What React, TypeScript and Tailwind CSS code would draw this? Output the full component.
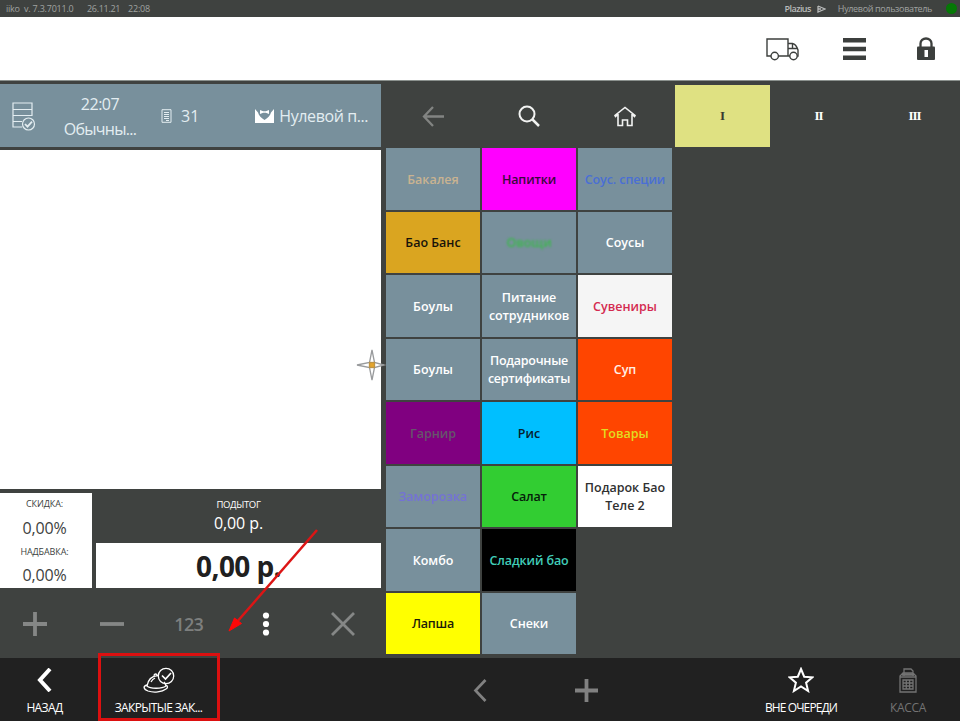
import type { ReactNode } from "react";

type Tile = { label: string; box: string; text: string };

const slate = "bg-[#78909c]";

const tiles: (Tile | null)[] = [
  { label: "Бакалея", box: slate, text: "text-[#c9b391]" },
  { label: "Напитки", box: "bg-[#ff00ff]", text: "text-[#3a0a3c] tracking-[-0.15px]" },
  { label: "Соус. специи", box: slate, text: "text-[#4a6fd4] tracking-[-0.1px] whitespace-nowrap" },
  { label: "Бао Банс", box: "bg-[#daa520]", text: "text-[#17130a]" },
  { label: "Овощи", box: slate, text: "text-[#3cb84c] blur-[0.8px]" },
  { label: "Соусы", box: slate, text: "text-white" },
  { label: "Боулы", box: slate, text: "text-white" },
  { label: "Питание сотрудников", box: slate, text: "text-white tracking-[-0.1px]" },
  { label: "Сувениры", box: "bg-[#f5f5f5]", text: "text-[#d42a50]" },
  { label: "Боулы", box: slate, text: "text-white" },
  { label: "Подарочные сертификаты", box: slate, text: "text-white tracking-[-0.25px]" },
  { label: "Суп", box: "bg-[#ff4500]", text: "text-[#fff0e6]" },
  { label: "Гарнир", box: "bg-[#800080]", text: "text-[#66566b]" },
  { label: "Рис", box: "bg-[#00bfff]", text: "text-[#06202c]" },
  { label: "Товары", box: "bg-[#ff4500]", text: "text-[#e2dc20]" },
  { label: "Заморозка", box: slate, text: "text-[#7471d6] blur-[0.6px]" },
  { label: "Салат", box: "bg-[#32cd32]", text: "text-[#06200a] tracking-[-0.2px]" },
  { label: "Подарок Бао Теле 2", box: "bg-white", text: "text-[#303030]" },
  { label: "Комбо", box: slate, text: "text-white" },
  { label: "Сладкий бао", box: "bg-black", text: "text-[#40cdb8] tracking-[-0.1px]" },
  null,
  { label: "Лапша", box: "bg-[#ffff00]", text: "text-[#1c1c08] tracking-[-0.2px]" },
  { label: "Снеки", box: slate, text: "text-white tracking-[-0.1px]" },
];

function TopBar() {
  return (
    <div className="flex h-[17px] items-center bg-[#3f4240] pl-[6px] text-[9px] leading-none text-[#a0a3a1]">
      <span className="w-[81px] tracking-[-0.22px]">iiko&nbsp; v. 7.3.7011.0</span>
      <span className="w-[41px] tracking-[-0.3px]">26.11.21</span>
      <span className="tracking-[-0.2px]">22:08</span>
      <span className="ml-auto font-semibold tracking-[-0.55px] text-[#b9bbba]">Plazius</span>
      <svg className="ml-[6px]" width="9" height="8" viewBox="0 0 9 8" fill="none" stroke="#b9bbba" strokeWidth="1.3">
        <path d="M1 1 8 4 1 7V1M1 4H4" />
      </svg>
      <span className="mr-[14px] ml-[12px] tracking-[-0.35px]">Нулевой пользователь</span>
      <span className="mr-[3px] size-[11px] rounded-full bg-[#057805]" />
    </div>
  );
}

function AppHeader() {
  return (
    <div className="flex h-[64px] items-center justify-end border-b border-[#8b918e] bg-white text-[#3c3f3d]">
      <svg width="34" height="24" viewBox="0 0 34 24" fill="none" stroke="currentColor" strokeWidth="1.4">
        <path d="M5 19H1V2H22V19H12.500M22 6.500H26.500Q30 7 32 13V19H31M24 19H22M22 11.500H31.500M26.500 7V11.500" />
        <circle cx="8.700" cy="19" r="3.700" fill="white" />
        <circle cx="27.500" cy="19" r="3.700" fill="white" />
      </svg>
      <svg className="ml-[43px]" width="23" height="22" viewBox="0 0 23 22" fill="currentColor">
        <path d="M0 0H23V4.500H0ZM0 8.700H23V13.200H0ZM0 17.400H23V21.900H0Z" />
      </svg>
      <svg className="mr-[25px] ml-[51px]" width="18" height="23" viewBox="0 0 18 23">
        <path d="M3.500 11V6.500a5.500 5 0 0 1 11 0V11" fill="none" stroke="currentColor" strokeWidth="2.300" />
        <rect y="9.500" width="18" height="13.500" rx="1" fill="currentColor" />
        <rect x="7.500" y="13" width="3.500" height="7" fill="white" />
      </svg>
    </div>
  );
}

function OrderHeader() {
  return (
    <div className="flex h-[63px] items-center bg-[#78909c] pt-px text-[16px] leading-[25px] text-[#e3edf1]">
      <svg className="ml-[12px]" width="24" height="29" viewBox="0 0 24 29" fill="none" stroke="currentColor" strokeWidth="1.200">
        <path d="M10 25H1V1H20V14M1 7.500H20M1 13.500H20M1 19.500H10" />
        <circle cx="16.500" cy="22" r="6" />
        <path d="m13 22 2.500 2.700 4.500-5" strokeWidth="1.800" />
      </svg>
      <div className="ml-[20px] flex w-[88px] flex-col items-center pt-px">
        <span className="tracking-[-0.5px]">22:07</span>
        <span className="tracking-[-0.7px]">Обычны...</span>
      </div>
      <svg className="ml-[17px]" width="11" height="14" viewBox="0 0 11 14" fill="none" stroke="currentColor">
        <path d="M1 .7H10V13.300H1ZM3 3.500H8M3 5.500H8M3 7.500H8M3 9.500H8M5 11.500H8" />
      </svg>
      <span className="ml-[9px] pt-px">31</span>
      <svg className="ml-[56px]" width="19" height="14" viewBox="0 0 19 14" fill="white">
        <path d="M0 0 3 3.500Q4 7.500 9.500 11 15 7.500 16 3.500L19 0V14H0Z" />
        <path d="m5 1 3.200 1.300h2.600L14 1v4l-3.200-1.300H8.200L5 5Z" />
      </svg>
      <span className="ml-[5px] pt-px tracking-[-0.4px]">Нулевой п...</span>
    </div>
  );
}

function Totals() {
  return (
    <div className="flex h-[95px] gap-1">
      <div className="flex w-[92px] flex-col items-center bg-white pr-[3px] text-[#3d3f3e]">
        <span className="h-[22px] text-[9px] leading-[21px] tracking-[-0.1px]">СКИДКА:</span>
        <span className="h-[26px] text-[16px] leading-[26px] tracking-[-0.15px]">0,00%</span>
        <span className="h-[22px] text-[9px] leading-[22px] tracking-[-0.1px]">НАДБАВКА:</span>
        <span className="text-[16px] leading-[25px] tracking-[-0.15px]">0,00%</span>
      </div>
      <div className="flex flex-1 flex-col">
        <div className="flex h-[50px] flex-col items-center text-white">
          <span className="mt-[3px] text-[9.5px] leading-[18px] tracking-[-0.35px]">ПОДЫТОГ</span>
          <span className="text-[16px] leading-[19px] tracking-[-0.1px]">0,00 р.</span>
        </div>
        <div className="flex flex-1 items-center justify-center bg-white pt-px text-[28px] leading-none font-bold tracking-[-0.6px] text-[#202020]">
          0,00 р.
        </div>
      </div>
    </div>
  );
}

function OrderActions() {
  return (
    <div className="flex h-[70px] items-center pt-[2px] text-[#858786]">
      <div className="flex w-[73.5px] justify-center pr-[3.5px]">
        <svg width="24" height="24" stroke="currentColor" strokeWidth="3.800"><path d="M12 0V24M0 12H24" /></svg>
      </div>
      <div className="flex w-[77px] justify-center">
        <svg width="24" height="24" stroke="currentColor" strokeWidth="3.800"><path d="M0 12H24" /></svg>
      </div>
      <div className="flex w-[77px] justify-center text-[18px] font-semibold tracking-[-0.6px] text-[#7d7f7e]">123</div>
      <div className="flex w-[77px] justify-center">
        <svg width="8" height="24" fill="white"><circle cx="4" cy="3.500" r="3.100" /><circle cx="4" cy="12" r="3.100" /><circle cx="4" cy="20.500" r="3.100" /></svg>
      </div>
      <div className="flex w-[77px] justify-center">
        <svg width="24" height="24" stroke="currentColor" strokeWidth="2.800"><path d="M1 1 23 23M23 1 1 23" /></svg>
      </div>
    </div>
  );
}

function OrderPanel() {
  return (
    <div className="flex w-[381px] shrink-0 flex-col pt-[3px]">
      <OrderHeader />
      <div className="relative mt-[3px] mb-[4px] h-[339px] bg-white">
        <svg className="absolute top-[199px] left-[356px]" width="32" height="32" viewBox="0 0 32 32" fill="white" stroke="#999b9d" strokeWidth="1.3">
          <path d="m16 1 2.500 12.500 9.500 2.500-9.500 2.500L16 31l-2.500-12.500L1 16l12.500-2.500Z" />
          <rect x="13.500" y="13.500" width="5" height="5" fill="#e5a52c" stroke="#bd9344" />
        </svg>
      </div>
      <Totals />
      <OrderActions />
    </div>
  );
}

function MenuPanel() {
  return (
    <div className="w-[286px] shrink-0">
      <div className="grid h-[67px] grid-cols-3 items-center justify-items-center gap-[2px] pt-[3px] text-[#f2f3f2]">
        <svg width="22" height="21" viewBox="0 0 22 21" fill="none" stroke="#828482" strokeWidth="2.300"><path d="M11 1 2 10.500 11 20M2 10.500H22" /></svg>
        <svg width="22" height="22" viewBox="0 0 22 22" fill="none" stroke="currentColor" strokeWidth="2"><circle cx="9" cy="9" r="7.500" /><path d="m14 14 7 7" strokeWidth="2.500" /></svg>
        <svg width="22" height="21" viewBox="0 0 22 21" fill="none" stroke="currentColor" strokeWidth="1.600"><path d="M4 8.500 1.500 10.500 1 9.500 11 1.500 21 9.500 20.500 10.500 18 8.500V19.500H13.500V14H8.500V19.500H4Z" /></svg>
      </div>
      <div className="grid auto-rows-[61.5px] grid-cols-3 gap-[2px] pt-[0.4px]">
        {tiles.map((tile, i) =>
          tile ? (
            <div key={i} className={`flex items-center justify-center pt-[1px] text-center ${tile.box}`}>
              <span className={`text-[12.5px] leading-[18px] font-semibold ${tile.text}`}>{tile.label}</span>
            </div>
          ) : (
            <div key={i} />
          ),
        )}
      </div>
    </div>
  );
}

function CoursePanel() {
  const base = "flex h-[62px] w-[95px] shrink-0 items-center justify-center font-['Liberation_Serif',serif] text-[13px] font-bold";
  return (
    <div className="ml-[3px] flex min-w-0 flex-1 gap-px overflow-hidden pt-[4px] text-white">
      <div className={`${base} bg-[#dfe182] text-[#383a30]`}>I</div>
      <div className={`${base} tracking-[-1px]`}>II</div>
      <div className={`${base} tracking-[-1px]`}>III</div>
    </div>
  );
}

function FooterItem({ label, className, children }: { label?: string; className: string; children: ReactNode }) {
  return (
    <div className={`flex flex-col items-center ${className}`}>
      <div className="flex h-[43px] items-center justify-center pt-px">{children}</div>
      {label && <span className="text-[12px] leading-[13px] whitespace-nowrap">{label}</span>}
    </div>
  );
}

function Footer() {
  return (
    <div className="flex h-[63px] bg-[#212121] text-white">
      <FooterItem label="НАЗАД" className="w-[89px] tracking-[-0.6px]">
        <svg width="15" height="24" viewBox="0 0 15 24" fill="none" stroke="currentColor" strokeWidth="4"><path d="M13 1 3 12 13 23" /></svg>
      </FooterItem>
      <div className="relative ml-[9px] w-[121px]">
        <FooterItem label="ЗАКРЫТЫЕ ЗАК..." className="tracking-[-0.65px]">
          <svg width="32" height="26" viewBox="0 0 32 26" fill="none" stroke="currentColor" strokeWidth="1.300">
            <path d="M15 8.500C8 9 5 13 4 19c3 3 15 3 19 0-.5-1.500-1-3-2-4M4 18c-4 1-4 4 1 6 6 2 14 1 18-2 2-1 2-3 0-4M8 15c1-2 2-3 4-4M11 8.500c0-2 3-2 3 0" />
            <circle cx="23" cy="9" r="7.700" />
            <path d="m19 8.500 3.500 3.500L28 6" strokeWidth="1.700" />
          </svg>
        </FooterItem>
        <div className="absolute -top-[5px] left-0 h-[68px] w-[122px] border-[3px] border-[#dc1010]" />
      </div>
      <div className="ml-[231px] flex w-[60px] items-center justify-center pt-[2px]">
        <svg width="14" height="23" viewBox="0 0 14 23" fill="none" stroke="#818181" strokeWidth="2.700"><path d="m12.500 1-10 10.500 10 10.500" /></svg>
      </div>
      <div className="ml-[46px] flex w-[60px] items-center justify-center pt-[2px]">
        <svg width="23" height="23" stroke="#818181" strokeWidth="3.800"><path d="M11.500 0V23M0 11.500H23" /></svg>
      </div>
      <FooterItem label="ВНЕ ОЧЕРЕДИ" className="ml-[134px] w-[102px] tracking-[-0.9px]">
        <svg width="26" height="26" viewBox="0 0 26 26" fill="none" stroke="currentColor" strokeWidth="2"><path d="m13 2 3.200 7.700 8.300.6-6.400 5.400 2 8.300-7.100-4.500L5.900 24l2-8.300-6.400-5.400 8.300-.6Z" /></svg>
      </FooterItem>
      <FooterItem label="КАССА" className="ml-[5px] w-[102px] tracking-[-0.35px] text-[#737373]">
        <svg width="18" height="25" viewBox="0 0 18 25" fill="none" stroke="currentColor" strokeWidth="1.300">
          <path d="M1 24V8l3-3h10l3 3V24ZM5 8V1H12l2 2V8M1 9H17M4 12H14V21H4ZM4 15H14M4 18H14M7.300 12V21M10.600 12V21" />
          <path d="M3 6.500H15" strokeWidth="2.500" />
        </svg>
      </FooterItem>
    </div>
  );
}

export default function App() {
  return (
    <div className="relative flex h-[721px] w-[960px] flex-col overflow-hidden bg-[#3f4240] font-['Open_Sans','Noto_Sans',sans-serif]">
      <TopBar />
      <AppHeader />
      <div className="flex h-[577px]">
        <OrderPanel />
        <div className="w-[5px] shrink-0" />
        <MenuPanel />
        <CoursePanel />
      </div>
      <Footer />
      <svg className="pointer-events-none absolute top-[525px] left-[224px]" width="98" height="112" viewBox="0 0 98 112">
        <path d="M93 5 12 98" stroke="#dc1515" strokeWidth="2.500" />
        <path d="m5 106 5.500-13 7 5.500Z" fill="#ff0808" stroke="#ff0808" />
      </svg>
    </div>
  );
}
